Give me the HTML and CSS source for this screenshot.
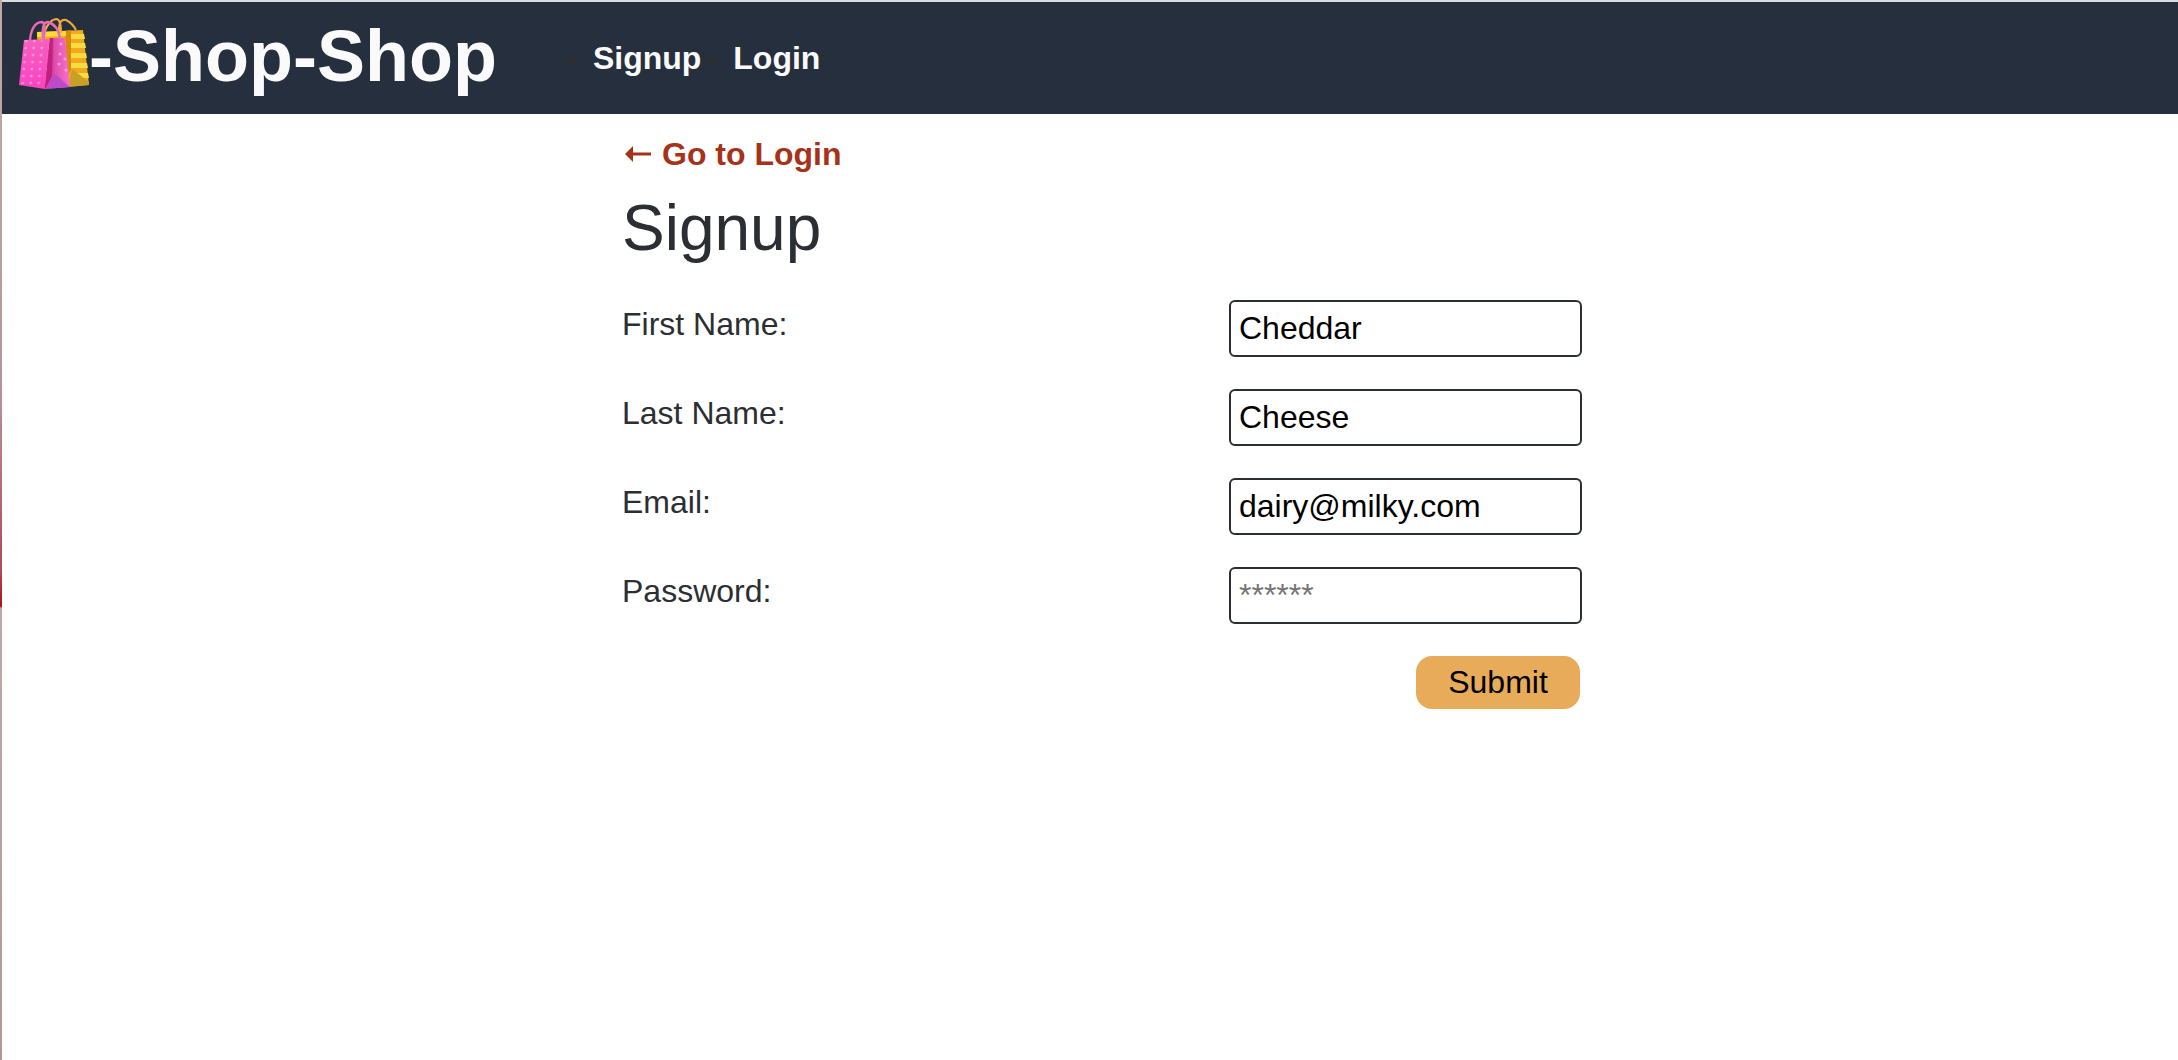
FILE: index.html
```html
<!DOCTYPE html>
<html lang="en">
<head>
<meta charset="utf-8">
<title>Shop-Shop</title>
<link rel="stylesheet" href="styles.css">
</head>
<body>
<header class="header">
  <h1 class="brand">
    <a class="brand-link" href="#">
      <svg class="brand-icon" viewBox="16 20 72 72" role="img" aria-label="Shopping bags">
        <defs>
          <linearGradient id="pink" x1="0" y1="0" x2="0" y2="1"><stop offset="0" stop-color="#f65fc0"/><stop offset="1" stop-color="#fb43c3"/></linearGradient>
          <linearGradient id="side" x1="0" y1="0" x2="1" y2="0"><stop offset="0" stop-color="#b3176f"/><stop offset=".4" stop-color="#e04fae"/><stop offset="1" stop-color="#f873cc"/></linearGradient>
          <pattern id="dots" width="8" height="7" patternUnits="userSpaceOnUse" patternTransform="translate(23 45) skewX(-5)"><circle cx="3" cy="3" r="1.3" fill="#ff9de0"/></pattern>
        </defs>
        <path d="M37 32L83 30L89 85L66 87L38 84Z" fill="#f3a91c"/>
        <path d="M70 34H84L85 39H69ZM69 43H85L86 48H69ZM69 53H86L87 58H70ZM70 63H87L88 68H70ZM71 73H88L89 78H71Z" fill="#f5dc42"/>
        <path d="M65 31L71 30L71 70L67 76Z" fill="#d98a0c"/>
        <path d="M37 32L66 31L66 36L37 37Z" fill="#f8dc3c"/>
        <path d="M72 69L89 82L89 85L68 87Z" fill="#c8a026"/>
        <path d="M44 33C48 22 53 19 57 19C60 20 61 25 61 33M59 31C59 21 62 19 66 20C70 22 74 26 76 30" fill="none" stroke="#eda93b" stroke-width="2.2"/>
        <path d="M24 40L51 39L45 89L19 85Z" fill="url(#pink)"/>
        <path d="M24 40L51 39L45 89L19 85Z" fill="url(#dots)"/>
        <path d="M50 38L65 38L70 87L45 89Z" fill="url(#side)"/>
        <path d="M50 38L53 38L52 76L45 89Z" fill="#c2207c"/>
        <path d="M54 73L70 87L45 89Z" fill="#bd4bc8"/>
        <g fill="#ff9de0"><circle cx="61" cy="44" r="1.5"/><circle cx="60" cy="54" r="1.5"/><circle cx="65" cy="59" r="1.5"/><circle cx="59" cy="64" r="1.5"/><circle cx="66" cy="70" r="1.5"/></g>
        <path d="M30 43C30 30 35 22 42 22C46 23 45 31 43 43M43 38C42 26 44 22 48 22C55 24 59 31 60 39" fill="none" stroke="#e66bb8" stroke-width="2.4"/>
      </svg>
      <span>-Shop-Shop</span>
    </a>
  </h1>
  <nav>
    <ul class="nav-list">
      <li class="nav-item"><a class="nav-link" href="#">Signup</a></li>
      <li class="nav-item"><a class="nav-link" href="#">Login</a></li>
    </ul>
  </nav>
</header>
<main class="container">
  <a class="back-link" href="#">
    <svg class="back-icon" viewBox="0 0 32 16" aria-hidden="true"><path d="M3 8L11 0V6.5H29V9.5H11V16Z" fill="currentColor"/></svg>
    Go to Login
  </a>
  <h2 class="title">Signup</h2>
  <form class="form">
    <div class="row"><label for="firstName">First Name:</label><input class="field" id="firstName" type="text" value="Cheddar"></div>
    <div class="row"><label for="lastName">Last Name:</label><input class="field" id="lastName" type="text" value="Cheese"></div>
    <div class="row"><label for="email">Email:</label><input class="field" id="email" type="email" value="dairy@milky.com"></div>
    <div class="row"><label for="pwd">Password:</label><input class="field" id="pwd" type="password" placeholder="******"></div>
    <button class="submit" type="submit">Submit</button>
  </form>
</main>
</body>
</html>
```
FILE: styles.css
```css
* { box-sizing: border-box; }

body {
  margin: 0;
  min-height: 100vh;
  border-left: 2px solid;
  border-image: linear-gradient(#c0aaa8 0, #b5a09c 280px, #b98e98 400px, #b04a5a 570px, #b01020 606px, #bcaaa8 608px, #b09a98) 1;
  background: #fff;
  color: #2b2f33;
  font: 32px/48px "Liberation Sans", Arial, sans-serif;
}

a { text-decoration: none; }

.header {
  display: flex;
  align-items: center;
  gap: 72px;
  min-height: 114px;
  padding-left: 14px;
  border-top: 2px solid #dadddf;
  background: #252f3d;
}

.brand {
  margin: 0;
  padding-bottom: 4px;
  font-size: 72px;
  line-height: 84px;
}

.brand-link {
  display: flex;
  align-items: center;
  gap: 1px;
  color: #fafafa;
}

.brand-icon {
  width: 72px;
  height: 72px;
  overflow: visible;
}

.nav-list {
  display: flex;
  gap: 32px;
  margin: 0;
  padding: 0 0 0 24px;
  color: #2b2f2f;
}

.nav-link {
  color: #fafafa;
  font-weight: bold;
}

.container {
  max-width: 984px;
  margin: 0 auto;
  padding: 16px 0 0 24px;
}

.back-link {
  display: flex;
  align-items: center;
  gap: 8px;
  color: #a53219;
  font-weight: bold;
}

.back-icon {
  width: 32px;
  height: 16px;
}

.title {
  margin: 2px 0 24px;
  font-size: 64px;
  font-weight: normal;
  line-height: 96px;
}

.form {
  display: flex;
  flex-direction: column;
  gap: 32px;
}

.row {
  display: flex;
  justify-content: space-between;
}

.field {
  width: 353px;
  height: 57px;
  padding: 0 8px;
  border: 2px solid #2b2f33;
  border-radius: 6px;
  background: #fff;
  color: #000;
  font: inherit;
}

.field::placeholder { color: #757575; }

.submit {
  align-self: flex-end;
  width: 164px;
  height: 53px;
  margin-right: 2px;
  padding: 0 0 2px;
  border: 0;
  border-radius: 16px;
  background: #e7ab5a;
  color: #000;
  font: inherit;
}
```
